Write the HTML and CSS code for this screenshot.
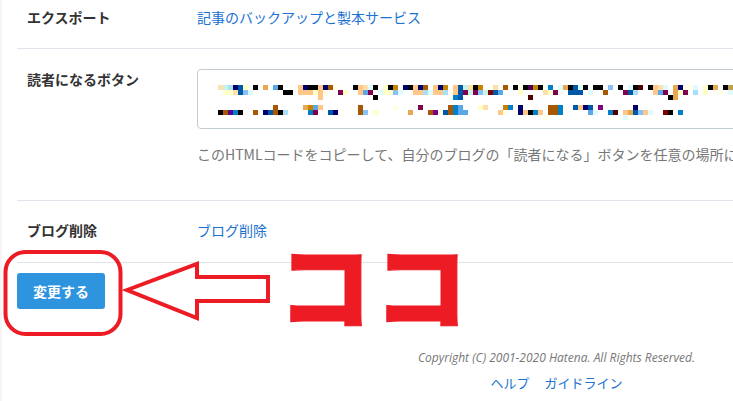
FILE: index.html
```html
<!DOCTYPE html>
<html lang="ja">
<head>
    <meta charset="UTF-8">
    <meta name="viewport" content="width=device-width, initial-scale=1.0">
    <title>ブログ設定</title>
    <link rel="stylesheet" href="styles.css">
</head>
<body>
    <div class="page">
        <div class="row">
            <div class="row-label">エクスポート</div>
            <div class="row-body"><a href="#">記事のバックアップと製本サービス</a></div>
        </div>

        <div class="row row-button">
            <div class="row-label">読者になるボタン</div>
            <div class="row-body">
                <div class="code-box">
                    <!-- モザイク: 1マス5px -->
                    <svg class="mosaic" width="520" height="35" viewBox="0 0 104 7" fill="none" stroke-width="1" shape-rendering="crispEdges">
                        <path stroke="#000" d="M7 .5h1M12 .5h1M18 .5h2M27 .5h1M31 .5h1M34 .5h1M38 .5h1M51 .5h1M59 .5h1M61 .5h1M64 .5h1M70 .5h1M73 .5h1M75 .5h2M80 .5h1M83 .5h1M86 .5h1M98 .5h1M101 .5h1M13 1.5h2M31 2.5h1M90 2.5h1M0 5.5h1M4 5.5h1M12 5.5h1M62 5.5h1M90 5.5h1"/>
                        <path stroke="#00006e" d="M3 .5h1M17 .5h1M21 .5h1M37 .5h1M40 .5h1M44 .5h1M92 .5h1M60 4.5h1M73 4.5h1M83 4.5h1M9 5.5h1M23 5.5h1M60 5.5h1"/>
                        <path stroke="#0058a8" d="M4 .5h1M48 .5h1M71 .5h1M4 1.5h1M48 1.5h1M55 1.5h1M70 1.5h3M82 1.5h1M48 2.5h1M71 4.5h1M74 4.5h1M10 5.5h1M22 5.5h1M45 5.5h1M83 5.5h1"/>
                        <path stroke="#0080c8" d="M66 .5h1M47 2.5h1M47 4.5h1M58 4.5h1M68 4.5h1M3 5.5h1M18 5.5h1M47 5.5h1M63 5.5h1M68 5.5h1M78 5.5h1M92 5.5h1"/>
                        <path stroke="#5aa8e8" d="M11 .5h1M29 1.5h1M56 1.5h1M88 1.5h1M19 4.5h1M48 4.5h1M48 5.5h2M74 5.5h1"/>
                        <path stroke="#88c0f8" d="M78 .5h1M5 1.5h1M35 1.5h1M52 1.5h1M29 5.5h1M84 5.5h1"/>
                        <path stroke="#a8e0f8" d="M2 .5h1M41 1.5h1M45 1.5h1M83 1.5h1M95 1.5h1M13 5.5h1"/>
                        <path stroke="#e0fbff" d="M30 .5h1M68 .5h1M72 .5h1M82 .5h1M89 .5h1M95 .5h1M6 1.5h1M32 1.5h1M36 1.5h1M42 1.5h1M74 1.5h1M102 1.5h1M75 5.5h1M86 5.5h1M81 6.5h1"/>
                        <path stroke="#c8f4e8" d="M1 .5h1M49 .5h1M50 1.5h1M53 1.5h1"/>
                        <path stroke="#ffc888" d="M16 .5h1M20 .5h1M28 .5h1M39 .5h1M43 .5h1M47 .5h1M87 .5h1M16 1.5h3M20 1.5h1M28 1.5h1M39 1.5h2M43 1.5h2M47 1.5h1M87 1.5h1M20 2.5h1M20 4.5h1M72 4.5h1M56 5.5h1M61 5.5h1M64 5.5h1M81 5.5h1M85 5.5h1"/>
                        <path stroke="#ffe0a8" d="M0 .5h1M29 .5h1M50 .5h1M55 .5h1M88 .5h1M3 1.5h1M65 1.5h1M53 4.5h1"/>
                        <path stroke="#e8a850" d="M9 .5h1M69 .5h1M91 .5h1M99 .5h1M91 1.5h1M91 2.5h1M17 4.5h1M38 5.5h1M82 5.5h1"/>
                        <path stroke="#c88400" d="M35 .5h1M45 .5h1M52 .5h1M63 .5h1M18 4.5h1M57 4.5h1"/>
                        <path stroke="#a85800" d="M22 .5h1M41 .5h1M57 .5h1M77 1.5h1M11 4.5h1M28 4.5h1M46 4.5h1M66 4.5h2M1 5.5h1M7 5.5h1M11 5.5h1M28 5.5h1M42 5.5h1M46 5.5h1M66 5.5h2"/>
                        <path stroke="#ffffc8" d="M5 .5h1M33 .5h1M97 .5h1M1 1.5h2M19 1.5h1M25 1.5h1M33 1.5h2M60 1.5h1M66 1.5h1M92 1.5h1M97 1.5h1M52 4.5h1M31 5.5h1"/>
                        <path stroke="#ffffe8" d="M23 .5h1M60 .5h1M93 .5h2M21 1.5h1M100 1.5h1M35 4.5h1M44 5.5h1M57 5.5h1M65 6.5h1"/>
                        <path stroke="#800050" d="M24 1.5h1M30 1.5h1M49 1.5h1M51 1.5h1M67 1.5h1M81 1.5h1M89 1.5h1M93 1.5h1M40 4.5h1M19 5.5h1"/>
                        <path stroke="#800080" d="M76 4.5h1M43 5.5h1"/>
                        <path stroke="#500090" d="M2 5.5h1"/>
                        <path stroke="#500050" d="M62 .5h1"/>
                        <path stroke="#500000" d="M84 .5h1M62 2.5h1M79 5.5h1"/>
                        <path stroke="#800000" d="M54 1.5h1M89 5.5h1"/>
                        <path stroke="#c0a050" d="M102 .5h1"/>
                    </svg>
                </div>
                <p class="hint">このHTMLコードをコピーして、自分のブログの「読者になる」ボタンを任意の場所に</p>
            </div>
        </div>

        <div class="row row-delete">
            <div class="row-label">ブログ削除</div>
            <div class="row-body"><a href="#">ブログ削除</a></div>
        </div>

        <button class="submit">変更する</button>

        <div class="footer">
            <div class="copyright">Copyright (C) 2001-2020 Hatena. All Rights Reserved.</div>
            <div class="footer-links">
                <a href="#">ヘルプ</a>
                <a href="#">ガイドライン</a>
            </div>
        </div>
    </div>

    <!-- 赤い注釈 -->
    <svg class="marks" width="733" height="401" viewBox="0 0 733 401" fill="none" stroke="#ed1c24" stroke-width="4">
        <rect x="5.5" y="252" width="115" height="82" rx="20"/>
        <path d="M127 290L197 264V277H268V301H197V318Z"/>
    </svg>
    <div class="koko">ココ</div>
</body>
</html>
```

FILE: styles.css
```css
html, body {
    margin: 0;
    padding: 0;
    overflow: hidden;
    background-color: #fff;
}

body {
    font-family: "Noto Sans CJK JP", "Noto Sans", sans-serif;
    font-size: 14px;
    line-height: 20px;
    color: #333;
    height: 401px;
    position: relative;
}

a {
    color: #1b72d0;
    text-decoration: none;
}

.page {
    height: 401px;
    padding: 7px 0 0 15px;
    border-left: 2px solid #f4f5f6;
    display: flex;
    flex-direction: column;
    align-items: flex-start;
    box-sizing: border-box;
}

.row {
    align-self: stretch;
    display: grid;
    grid-template-columns: 180px minmax(0, 1fr);
    padding-bottom: 21px;
    border-bottom: 1px solid #dfe5ea;
}

.row-label {
    padding-left: 10px;
    font-weight: 700;
    white-space: nowrap;
}

.row-button {
    padding-top: 20px;
    padding-bottom: 35px;
}

.row-delete {
    padding-top: 19px;
    padding-bottom: 22px;
}

.code-box {
    width: 640px;
    height: 60px;
    padding: 15px 0 0 20px;
    border: 1px solid #c0ccd2;
    border-radius: 4px;
    box-sizing: border-box;
}

.mosaic {
    display: block;
}

.hint {
    margin: 15px 0 1px;
    color: #777;
    white-space: nowrap;
}

.submit {
    width: 88px;
    height: 36px;
    margin-top: 10px;
    padding: 0;
    border: none;
    border-radius: 3px;
    background-color: #2d94dd;
    color: #fff;
    font-family: inherit;
    font-size: 14px;
    font-weight: 700;
}

.footer {
    align-self: flex-end;
    margin: 39px 38px 0 0;
    text-align: center;
}

.copyright {
    font-family: "Open Sans", sans-serif;
    font-size: 12px;
    font-style: italic;
    color: #777;
}

.footer-links {
    margin-top: 5px;
    font-size: 13px;
}

.footer-links a {
    margin: 0 6px;
}

.marks {
    position: absolute;
    left: 0;
    top: 0;
    pointer-events: none;
}

.koko {
    position: absolute;
    left: 278px;
    top: 222px;
    font-size: 94px;
    letter-spacing: 2px;
    line-height: 120px;
    font-weight: 900;
    color: #ed1c24;
    -webkit-text-stroke: 1px #ed1c24;
    white-space: nowrap;
}
```
